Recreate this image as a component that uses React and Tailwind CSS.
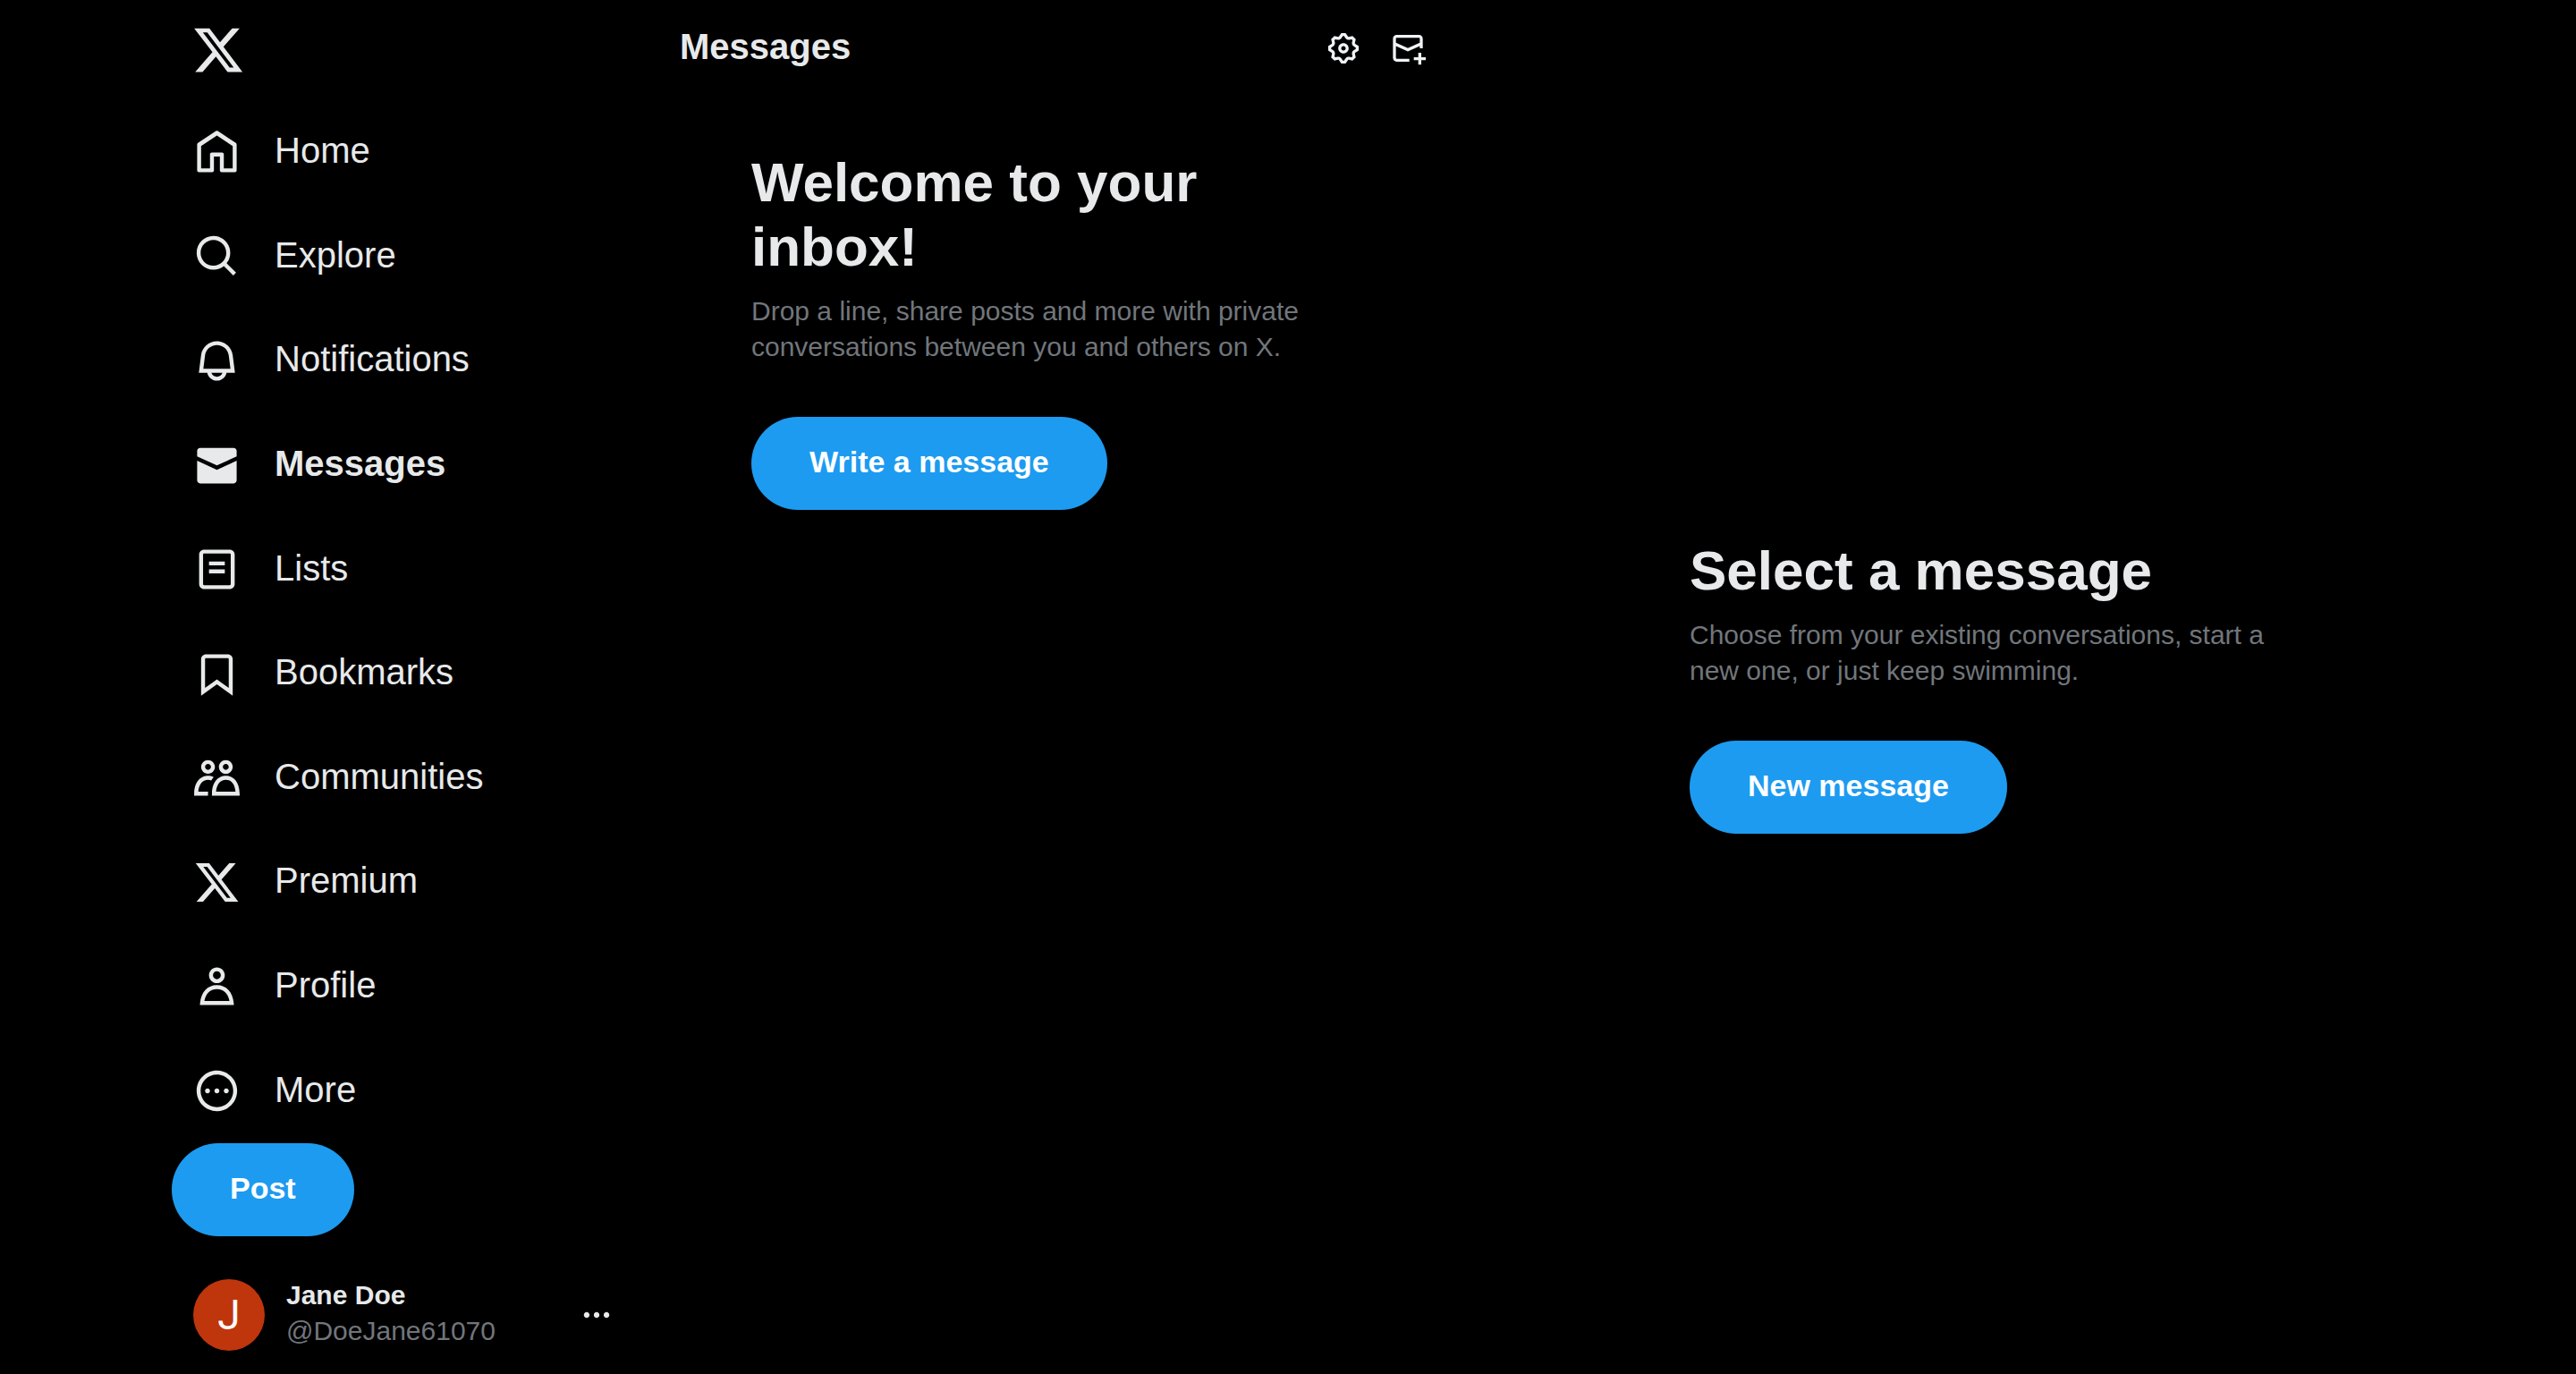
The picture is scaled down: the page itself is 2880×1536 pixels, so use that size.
const X_LOGO =
  "M18.244 2.25h3.308l-7.227 8.26 8.502 11.24H16.17l-5.214-6.817L4.99 21.75H1.68l7.73-8.835L1.254 2.25H8.08l4.713 6.231zm-1.161 17.52h1.833L7.084 4.126H5.117z";
const GEAR =
  "M10.54 1.75h2.92l1.57 2.36c.11.17.32.25.53.21l2.53-.59 2.17 2.17-.58 2.54c-.05.2.04.41.21.53l2.36 1.57v2.92l-2.36 1.57c-.17.12-.26.33-.21.53l.58 2.54-2.17 2.17-2.53-.59c-.21-.04-.42.04-.53.21l-1.57 2.36h-2.92l-1.58-2.36c-.11-.17-.32-.25-.52-.21l-2.54.59-2.17-2.17.58-2.54c.05-.2-.03-.41-.21-.53l-2.35-1.57v-2.92L4.1 8.97c.18-.12.26-.33.21-.53L3.73 5.9 5.9 3.73l2.54.59c.2.04.41-.04.52-.21l1.58-2.36zm1.07 2l-.98 1.47C10.05 6.08 9 6.5 7.99 6.27l-1.46-.34-.6.6.33 1.46c.24 1.01-.18 2.07-1.05 2.64l-1.46.98v.78l1.46.98c.87.57 1.29 1.63 1.05 2.64l-.33 1.46.6.6 1.46-.34c1.01-.23 2.06.19 2.64 1.05l.98 1.47h.78l.97-1.47c.58-.86 1.63-1.28 2.65-1.05l1.45.34.61-.6-.34-1.46c-.23-1.01.18-2.07 1.05-2.64l1.47-.98v-.78l-1.47-.98c-.87-.57-1.28-1.63-1.05-2.64l.34-1.46-.61-.6-1.45.34c-1.02.23-2.07-.19-2.65-1.05l-.97-1.47h-.78zM12 10.5c-.83 0-1.5.67-1.5 1.5s.67 1.5 1.5 1.5c.82 0 1.5-.67 1.5-1.5s-.68-1.5-1.5-1.5zM8.5 12c0-1.93 1.56-3.5 3.5-3.5 1.93 0 3.5 1.57 3.5 3.5s-1.57 3.5-3.5 3.5c-1.94 0-3.5-1.57-3.5-3.5z";
const COMPOSE =
  "M1.998 5.5c0-1.381 1.119-2.5 2.5-2.5h15c1.381 0 2.5 1.119 2.5 2.5V12h-2v-1.537l-8 3.635-8-3.638V18.5c0 .276.224.5.5.5H13v2H4.498c-1.381 0-2.5-1.119-2.5-2.5v-13zm2 2.764l8 3.638 8-3.636V5.5c0-.276-.224-.5-.5-.5h-15c-.276 0-.5.224-.5.5v2.764zM19 18v-3h2v3h3v2h-3v3h-2v-3h-3v-2h3z";
const DOTS =
  "M3 12c0-1.1.9-2 2-2s2 .9 2 2-.9 2-2 2-2-.9-2-2zm9 2c1.1 0 2-.9 2-2s-.9-2-2-2-2 .9-2 2 .9 2 2 2zm7 0c1.1 0 2-.9 2-2s-.9-2-2-2-2 .9-2 2 .9 2 2 2z";

const NAV = [
  {
    label: "Home",
    path: "M21.591 7.146L12.52 1.157c-.316-.21-.724-.21-1.04 0l-9.071 5.99c-.26.173-.409.456-.409.757v13.183c0 .502.418.913.929.913h6.638c.511 0 .929-.41.929-.913v-7.075h3.008v7.075c0 .502.418.913.929.913h6.639c.51 0 .928-.41.928-.913V7.904c0-.301-.158-.584-.408-.758zM20 20l-4.5.01.011-7.097c0-.502-.418-.913-.928-.913H9.44c-.511 0-.929.41-.929.913L8.5 20H4V8.773l8.011-5.342L20 8.764z",
  },
  {
    label: "Explore",
    path: "M10.25 3.75c-3.59 0-6.5 2.91-6.5 6.5s2.91 6.5 6.5 6.5c1.795 0 3.419-.726 4.596-1.904 1.178-1.177 1.904-2.801 1.904-4.596 0-3.59-2.91-6.5-6.5-6.5zm-8.5 6.5c0-4.694 3.806-8.5 8.5-8.5s8.5 3.806 8.5 8.5c0 1.986-.682 3.815-1.824 5.262l4.781 4.781-1.414 1.414-4.781-4.781c-1.447 1.142-3.276 1.824-5.262 1.824-4.694 0-8.5-3.806-8.5-8.5z",
  },
  {
    label: "Notifications",
    path: "M19.993 9.042C19.48 5.017 16.054 2 11.996 2s-7.49 3.021-7.999 7.051L2.866 18H7.1c.463 2.282 2.481 4 4.9 4s4.437-1.718 4.9-4h4.236l-1.143-8.958zM12 20c-1.306 0-2.417-.835-2.829-2h5.658c-.412 1.165-1.523 2-2.829 2zm-6.866-4l.847-6.698C6.364 6.272 8.941 4 11.996 4s5.627 2.268 6.013 5.295L18.864 16H5.134z",
  },
  {
    label: "Messages",
    active: true,
    path: "M1.998 4.499c0-.828.671-1.499 1.5-1.499h17c.828 0 1.5.671 1.5 1.499v2.858l-10 4.545-10-4.547V4.499zm0 5.053V19.5c0 .828.671 1.5 1.5 1.5h17c.828 0 1.5-.672 1.5-1.5V9.554l-10 4.545-10-4.547z",
  },
  {
    label: "Lists",
    path: "M3 4.5C3 3.12 4.12 2 5.5 2h13C19.88 2 21 3.12 21 4.5v15c0 1.38-1.12 2.5-2.5 2.5h-13C4.12 22 3 20.88 3 19.5v-15zM5.5 4c-.28 0-.5.22-.5.5v15c0 .28.22.5.5.5h13c.28 0 .5-.22.5-.5v-15c0-.28-.22-.5-.5-.5h-13zM16 10H8V8h8v2zm-8 2h8v2H8v-2z",
  },
  {
    label: "Bookmarks",
    path: "M4 4.5C4 3.12 5.119 2 6.5 2h11C18.881 2 20 3.12 20 4.5v18.44l-8-5.71-8 5.71V4.5zM6.5 4c-.276 0-.5.22-.5.5v14.56l6-4.29 6 4.29V4.5c0-.28-.224-.5-.5-.5h-11z",
  },
  {
    label: "Communities",
    path: "M7.501 19.917L7.471 21H.472l.029-1.027c.184-6.618 3.736-8.977 7-8.977.963 0 1.95.212 2.87.672-.444.478-.851 1.03-1.212 1.656-.507-.204-1.054-.329-1.658-.329-2.767 0-4.57 2.223-4.938 6.004H7.56c-.023.302-.05.599-.059.918zm15.998.056L23.528 21H9.472l.029-1.027c.184-6.618 3.736-8.977 7-8.977s6.816 2.358 7 8.977zM21.437 19c-.367-3.781-2.17-6.004-4.938-6.004s-4.57 2.223-4.938 6.004h9.875zm-4.938-9c-.799 0-1.527-.279-2.116-.73-.836-.64-1.384-1.638-1.384-2.77 0-1.93 1.567-3.5 3.5-3.5s3.5 1.57 3.5 3.5c0 1.132-.548 2.13-1.384 2.77-.589.451-1.317.73-2.116.73zm-1.5-3.5c0 .827.673 1.5 1.5 1.5s1.5-.673 1.5-1.5-.673-1.5-1.5-1.5-1.5.673-1.5 1.5zM7.501 3C9.434 3 11 4.57 11 6.5S9.434 10 7.501 10 4.001 8.43 4.001 6.5 5.568 3 7.501 3zm0 2C6.674 5 6.001 5.673 6.001 6.5S6.674 8 7.501 8 9 7.327 9 6.5 8.328 5 7.501 5z",
  },
  { label: "Premium", path: X_LOGO },
  {
    label: "Profile",
    path: "M5.651 19h12.698c-.337-1.8-1.023-3.21-1.945-4.19C15.318 13.65 13.838 13 12 13s-3.317.65-4.404 1.81c-.922.98-1.608 2.39-1.945 4.19zm.486-5.56C7.627 11.85 9.648 11 12 11s4.373.85 5.863 2.44c1.477 1.58 2.366 3.8 2.632 6.46l.11 1.1H3.395l.11-1.1c.266-2.66 1.155-4.88 2.632-6.46zM12 4c-1.105 0-2 .9-2 2s.895 2 2 2 2-.9 2-2-.895-2-2-2zM8 6c0-2.21 1.791-4 4-4s4 1.79 4 4-1.791 4-4 4-4-1.79-4-4z",
  },
];
const MORE =
  "M3.75 12c0-4.56 3.69-8.25 8.25-8.25s8.25 3.69 8.25 8.25-3.69 8.25-8.25 8.25S3.75 16.56 3.75 12zM12 1.75C6.34 1.75 1.75 6.34 1.75 12S6.34 22.25 12 22.25 22.25 17.66 22.25 12 17.66 1.75 12 1.75zm-4.75 11.5c.69 0 1.25-.56 1.25-1.25s-.56-1.25-1.25-1.25S6 11.31 6 12s.56 1.25 1.25 1.25zm9.5 0c.69 0 1.25-.56 1.25-1.25s-.56-1.25-1.25-1.25-1.25.56-1.25 1.25.56 1.25 1.25 1.25zM13.25 12c0 .69-.56 1.25-1.25 1.25s-1.25-.56-1.25-1.25.56-1.25 1.25-1.25 1.25.56 1.25 1.25z";

function Icon({ path, className }) {
  return (
    <svg viewBox="0 0 24 24" aria-hidden="true" className={`shrink-0 fill-current ${className}`}>
      <path d={path} />
    </svg>
  );
}

function PillButton({ children }) {
  return (
    <button
      type="button"
      className="flex h-26 cursor-pointer items-center rounded-full bg-[#1d9bf0] px-[65px] pb-1 text-[34px] leading-10 font-bold whitespace-nowrap text-white hover:bg-[#1a8cd8]"
    >
      {children}
    </button>
  );
}

function EmptyState({ title, text, action }) {
  return (
    <div className="flex w-full max-w-[672px] flex-col items-start">
      <h2 className="-mt-0.5 mb-4 text-[62px] leading-18 font-bold">{title}</h2>
      <p className="mb-[58px] text-[30px] leading-10 text-[#71767b]">{text}</p>
      <PillButton>{action}</PillButton>
    </div>
  );
}

function NavContent({ label, path, active }) {
  return (
    <>
      <Icon path={path} className="size-[53px]" />
      <span className={active ? "pb-1 font-bold" : "pb-1"}>{label}</span>
    </>
  );
}

function Sidebar() {
  return (
    <header className="flex min-h-screen flex-col pr-[18px] pb-0.5 pl-48">
      <h1 className="flex h-28 items-center pl-[22px]">
        <a href="#home" aria-label="X">
          <Icon path={X_LOGO} className="size-15" />
        </a>
      </h1>
      <nav aria-label="Primary" className="flex flex-1 flex-col text-[40px] leading-12">
        {NAV.map((item) => (
          <a
            key={item.label}
            href={`#${item.label.toLowerCase()}`}
            aria-current={item.active ? "page" : undefined}
            className="flex flex-1 items-center gap-[38px] pl-6"
          >
            <NavContent {...item} />
          </a>
        ))}
        <button type="button" className="flex flex-1 cursor-pointer items-center gap-[38px] pl-6 text-left">
          <NavContent label="More" path={MORE} />
        </button>
      </nav>
      <div className="mb-6 flex">
        <PillButton>Post</PillButton>
      </div>
      <button type="button" className="flex cursor-pointer items-center gap-6 rounded-full px-6 py-[22px] text-left text-[30px] leading-10">
        <span className="flex size-20 items-center justify-center rounded-full bg-[#bf360c] font-['Roboto',sans-serif] text-[46px] text-white">
          J
        </span>
        <span className="flex flex-1 flex-col pb-1">
          <span className="font-bold">Jane Doe</span>
          <span className="text-[#71767b]">@DoeJane61070</span>
        </span>
        <Icon path={DOTS} className="size-[38px]" />
      </button>
    </header>
  );
}

export default function App() {
  return (
    <div className="grid min-h-screen grid-cols-[728fr_898fr_1254fr] bg-black font-['Liberation_Sans',Arial,sans-serif] text-[#e7e9ea]">
      <Sidebar />
      <section aria-label="Inbox">
        <div className="flex h-[108px] items-center justify-between pr-4 pl-8">
          <h2 className="pb-1 text-[40px] leading-12 font-bold">Messages</h2>
          <div className="flex text-[#eff3f4]">
            <button type="button" aria-label="Settings" className="flex size-18 cursor-pointer items-center justify-center">
              <Icon path={GEAR} className="size-10" />
            </button>
            <button type="button" aria-label="Compose message" className="flex size-18 cursor-pointer items-center justify-center">
              <Icon path={COMPOSE} className="size-10" />
            </button>
          </div>
        </div>
        <div className="px-28 py-[62px]">
          <EmptyState
            title="Welcome to your inbox!"
            text="Drop a line, share posts and more with private conversations between you and others on X."
            action="Write a message"
          />
        </div>
      </section>
      <main className="flex items-center justify-center pr-14">
        <EmptyState
          title="Select a message"
          text="Choose from your existing conversations, start a new one, or just keep swimming."
          action="New message"
        />
      </main>
    </div>
  );
}
